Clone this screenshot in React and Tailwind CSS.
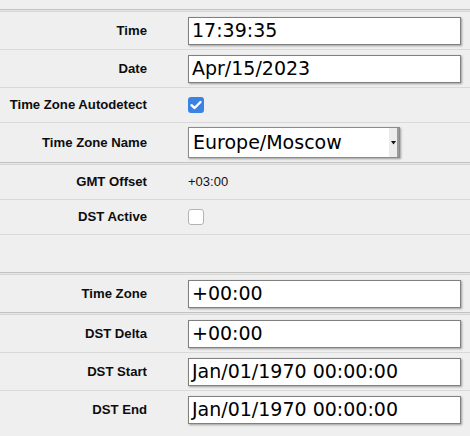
import React from "react";

const labelCls =
  "w-[180px] shrink-0 pr-[33px] text-right text-[13.15px] font-bold text-[#0d0d0d] [font-family:'Liberation_Sans',Arial,sans-serif]";

function Sep() {
  return <div className="h-px bg-[#d9d9d9]" />;
}
function DSep() {
  return (
    <div className="flex flex-col">
      <div className="h-px bg-[#c2c2c2]" />
      <div className="h-px bg-[#e6e6e6]" />
      <div className="h-px bg-[#d6d6d6]" />
    </div>
  );
}

function Input({ value }) {
  return (
    <div className="flex h-[28px] w-[273px] items-center border border-[#808080] bg-white pl-[3px] text-[19px] leading-none text-black shadow-[1px_1px_2px_rgba(0,0,0,0.35)] [font-family:'DejaVu_Sans',sans-serif]">
      {value}
    </div>
  );
}

function Row({ label, h, children }) {
  return (
    <div className="flex items-center" style={{ height: h }}>
      <div className={labelCls}>{label}</div>
      <div className="flex flex-1 items-center pl-[8px]">{children}</div>
    </div>
  );
}

function CheckOn() {
  return (
    <div className="flex h-[16px] w-[16px] items-center justify-center rounded-[3px] bg-[#3b83e3]">
      <svg width="12" height="10" viewBox="0 0 12 10">
        <path d="M1.5 5.2 L4.6 8 L10.5 2" fill="none" stroke="white" strokeWidth="2.4" strokeLinecap="round" strokeLinejoin="round" />
      </svg>
    </div>
  );
}
function CheckOff() {
  return <div className="h-[16px] w-[16px] rounded-[3px] border border-[#b3b3b3] bg-white" />;
}

export default function App() {
  return (
    <div className="h-[436px] w-[470px] overflow-hidden bg-[#efefef] pt-[9px]">
      <DSep />
      <Row label="Time" h={37}>
        <Input value="17:39:35" />
      </Row>
      <Sep />
      <Row label="Date" h={37}>
        <Input value="Apr/15/2023" />
      </Row>
      <Sep />
      <Row label="Time Zone Autodetect" h={34}>
        <CheckOn />
      </Row>
      <Sep />
      <Row label="Time Zone Name" h={39}>
        <div className="flex h-[31px] w-[212px] items-stretch border border-[#8a8a8a] bg-white shadow-[1px_1px_2px_rgba(0,0,0,0.35)]">
          <div className="flex flex-1 items-center pl-[4px] text-[19px] leading-none text-black [font-family:'DejaVu_Sans',sans-serif]">
            Europe/Moscow
          </div>
          <div className="flex w-[10px] items-center justify-center border-r-[2px] border-[#9a9a9a] bg-[#ececec]">
            <svg width="5" height="4" viewBox="0 0 5 4">
              <path d="M0 0 H5 L2.5 3.5 Z" fill="#111" />
            </svg>
          </div>
        </div>
      </Row>
      <DSep />
      <Row label="GMT Offset" h={34}>
        <span className="text-[13px] text-[#111] [font-family:'Liberation_Sans',Arial,sans-serif]">+03:00</span>
      </Row>
      <Sep />
      <Row label="DST Active" h={34}>
        <CheckOff />
      </Row>
      <Sep />
      <div className="h-[37px]" />
      <DSep />
      <Row label="Time Zone" h={37}>
        <Input value="+00:00" />
      </Row>
      <DSep />
      <Row label="DST Delta" h={37}>
        <Input value="+00:00" />
      </Row>
      <Sep />
      <Row label="DST Start" h={37}>
        <Input value="Jan/01/1970 00:00:00" />
      </Row>
      <Sep />
      <Row label="DST End" h={37}>
        <Input value="Jan/01/1970 00:00:00" />
      </Row>
    </div>
  );
}
